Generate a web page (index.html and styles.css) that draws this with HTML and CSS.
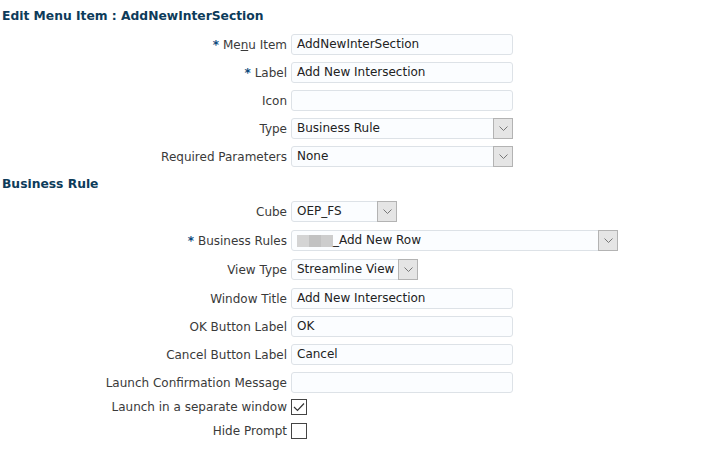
FILE: index.html
```html
<!DOCTYPE html>
<html lang="en">
<head>
    <meta charset="UTF-8">
    <title>Edit Menu Item</title>
    <link rel="stylesheet" href="styles.css">
</head>
<body>

<h2 class="titulo titulo-primero">Edit Menu Item : AddNewInterSection</h2>
<div class="formulario">
    <label class="etiqueta"><span class="req">*</span> Me<u>n</u>u Item</label>
    <div class="campo ancho-normal">AddNewInterSection</div>

    <label class="etiqueta"><span class="req">*</span> Label</label>
    <div class="campo ancho-normal">Add New Intersection</div>

    <label class="etiqueta">Icon</label>
    <div class="campo ancho-normal"></div>

    <label class="etiqueta">Type</label>
    <div class="campo lista ancho-normal">
        <span class="valor">Business Rule</span>
        <span class="boton-lista"><svg width="9" height="5" viewBox="0 0 9 5"><path d="M0.5 0.5 L4.5 4.5 L8.5 0.5" fill="none" stroke="#777" stroke-width="1"/></svg></span>
    </div>

    <label class="etiqueta">Required Parameters</label>
    <div class="campo lista ancho-normal">
        <span class="valor">None</span>
        <span class="boton-lista"><svg width="9" height="5" viewBox="0 0 9 5"><path d="M0.5 0.5 L4.5 4.5 L8.5 0.5" fill="none" stroke="#777" stroke-width="1"/></svg></span>
    </div>
</div>

<h2 class="titulo titulo-segundo">Business Rule</h2>
<div class="formulario">
    <label class="etiqueta">Cube</label>
    <div class="campo lista ancho-cubo">
        <span class="valor">OEP_FS</span>
        <span class="boton-lista"><svg width="9" height="5" viewBox="0 0 9 5"><path d="M0.5 0.5 L4.5 4.5 L8.5 0.5" fill="none" stroke="#777" stroke-width="1"/></svg></span>
    </div>

    <label class="etiqueta fila-extra"><span class="req">*</span> Business Rules</label>
    <div class="campo lista ancho-reglas fila-extra">
        <span class="valor"><span class="borroso"></span>_Add New Row</span>
        <span class="boton-lista"><svg width="9" height="5" viewBox="0 0 9 5"><path d="M0.5 0.5 L4.5 4.5 L8.5 0.5" fill="none" stroke="#777" stroke-width="1"/></svg></span>
    </div>

    <label class="etiqueta fila-extra">View Type</label>
    <div class="campo lista ancho-vista fila-extra">
        <span class="valor">Streamline View</span>
        <span class="boton-lista"><svg width="9" height="5" viewBox="0 0 9 5"><path d="M0.5 0.5 L4.5 4.5 L8.5 0.5" fill="none" stroke="#777" stroke-width="1"/></svg></span>
    </div>

    <label class="etiqueta fila-extra">Window Title</label>
    <div class="campo ancho-normal fila-extra">Add New Intersection</div>

    <label class="etiqueta">OK Button Label</label>
    <div class="campo ancho-normal">OK</div>

    <label class="etiqueta">Cancel Button Label</label>
    <div class="campo ancho-normal">Cancel</div>

    <label class="etiqueta">Launch Confirmation Message</label>
    <div class="campo ancho-normal"></div>

    <label class="etiqueta casilla-primera">Launch in a separate window</label>
    <div class="casilla casilla-primera"><svg width="12" height="10" viewBox="0 0 12 10"><path d="M1 5 L4.5 8.5 L11 1.5" fill="none" stroke="#333" stroke-width="1.2"/></svg></div>

    <label class="etiqueta casilla-segunda">Hide Prompt</label>
    <div class="casilla casilla-segunda"></div>
</div>

</body>
</html>
```

FILE: styles.css
```css
body {
    margin: 0;
    font-family: "DejaVu Sans", Verdana, sans-serif;
    font-size: 12px;
    color: #333;
    background: #fff;
}

.titulo {
    font-size: 12.3px;
    font-weight: bold;
    color: #0d3b5a;
    line-height: 16px;
    margin: 0 0 0 2px;
}

.titulo-primero {
    margin-top: 8px;
    margin-bottom: 10px;
}

.titulo-segundo {
    margin-top: 9px;
    margin-bottom: 9px;
}

.formulario {
    display: grid;
    grid-template-columns: 287px auto;
    column-gap: 4px;
    row-gap: 7px;
    align-items: center;
}

.etiqueta {
    text-align: right;
    white-space: nowrap;
    color: #3a3a3a;
}

.fila-extra {
    margin-top: 1px;
}

.casilla-primera {
    margin-top: -1px;
}

.casilla-segunda {
    margin-top: 1px;
}

.req {
    color: #0e4a7c;
    font-weight: bold;
}

.campo {
    box-sizing: border-box;
    height: 21px;
    line-height: 19px;
    padding: 0 5px;
    border: 1px solid #dde2e7;
    border-radius: 3px;
    background: #fbfdff;
    color: #222;
    white-space: nowrap;
}

.ancho-normal { width: 222px; }
.ancho-cubo { width: 106px; }
.ancho-reglas { width: 327px; }
.ancho-vista { width: 127px; }

.lista {
    display: flex;
    align-items: center;
    padding-right: 0;
}

.valor {
    flex: 1;
    display: flex;
    align-items: center;
}

.boton-lista {
    box-sizing: border-box;
    width: 20px;
    height: 21px;
    margin-right: -1px;
    border: 1px solid #b3b3b3;
    background: #e5e5e5;
    display: flex;
    align-items: center;
    justify-content: center;
}

.borroso {
    display: inline-block;
    width: 36px;
    height: 12px;
    background: linear-gradient(to right, #d4d4d4 0 12px, #c2c2c2 12px 24px, #cdcdcd 24px 36px);
}

.casilla {
    box-sizing: border-box;
    width: 16px;
    height: 16px;
    border: 1px solid #444;
    background: #fff;
    display: flex;
    align-items: center;
    justify-content: center;
}
```
